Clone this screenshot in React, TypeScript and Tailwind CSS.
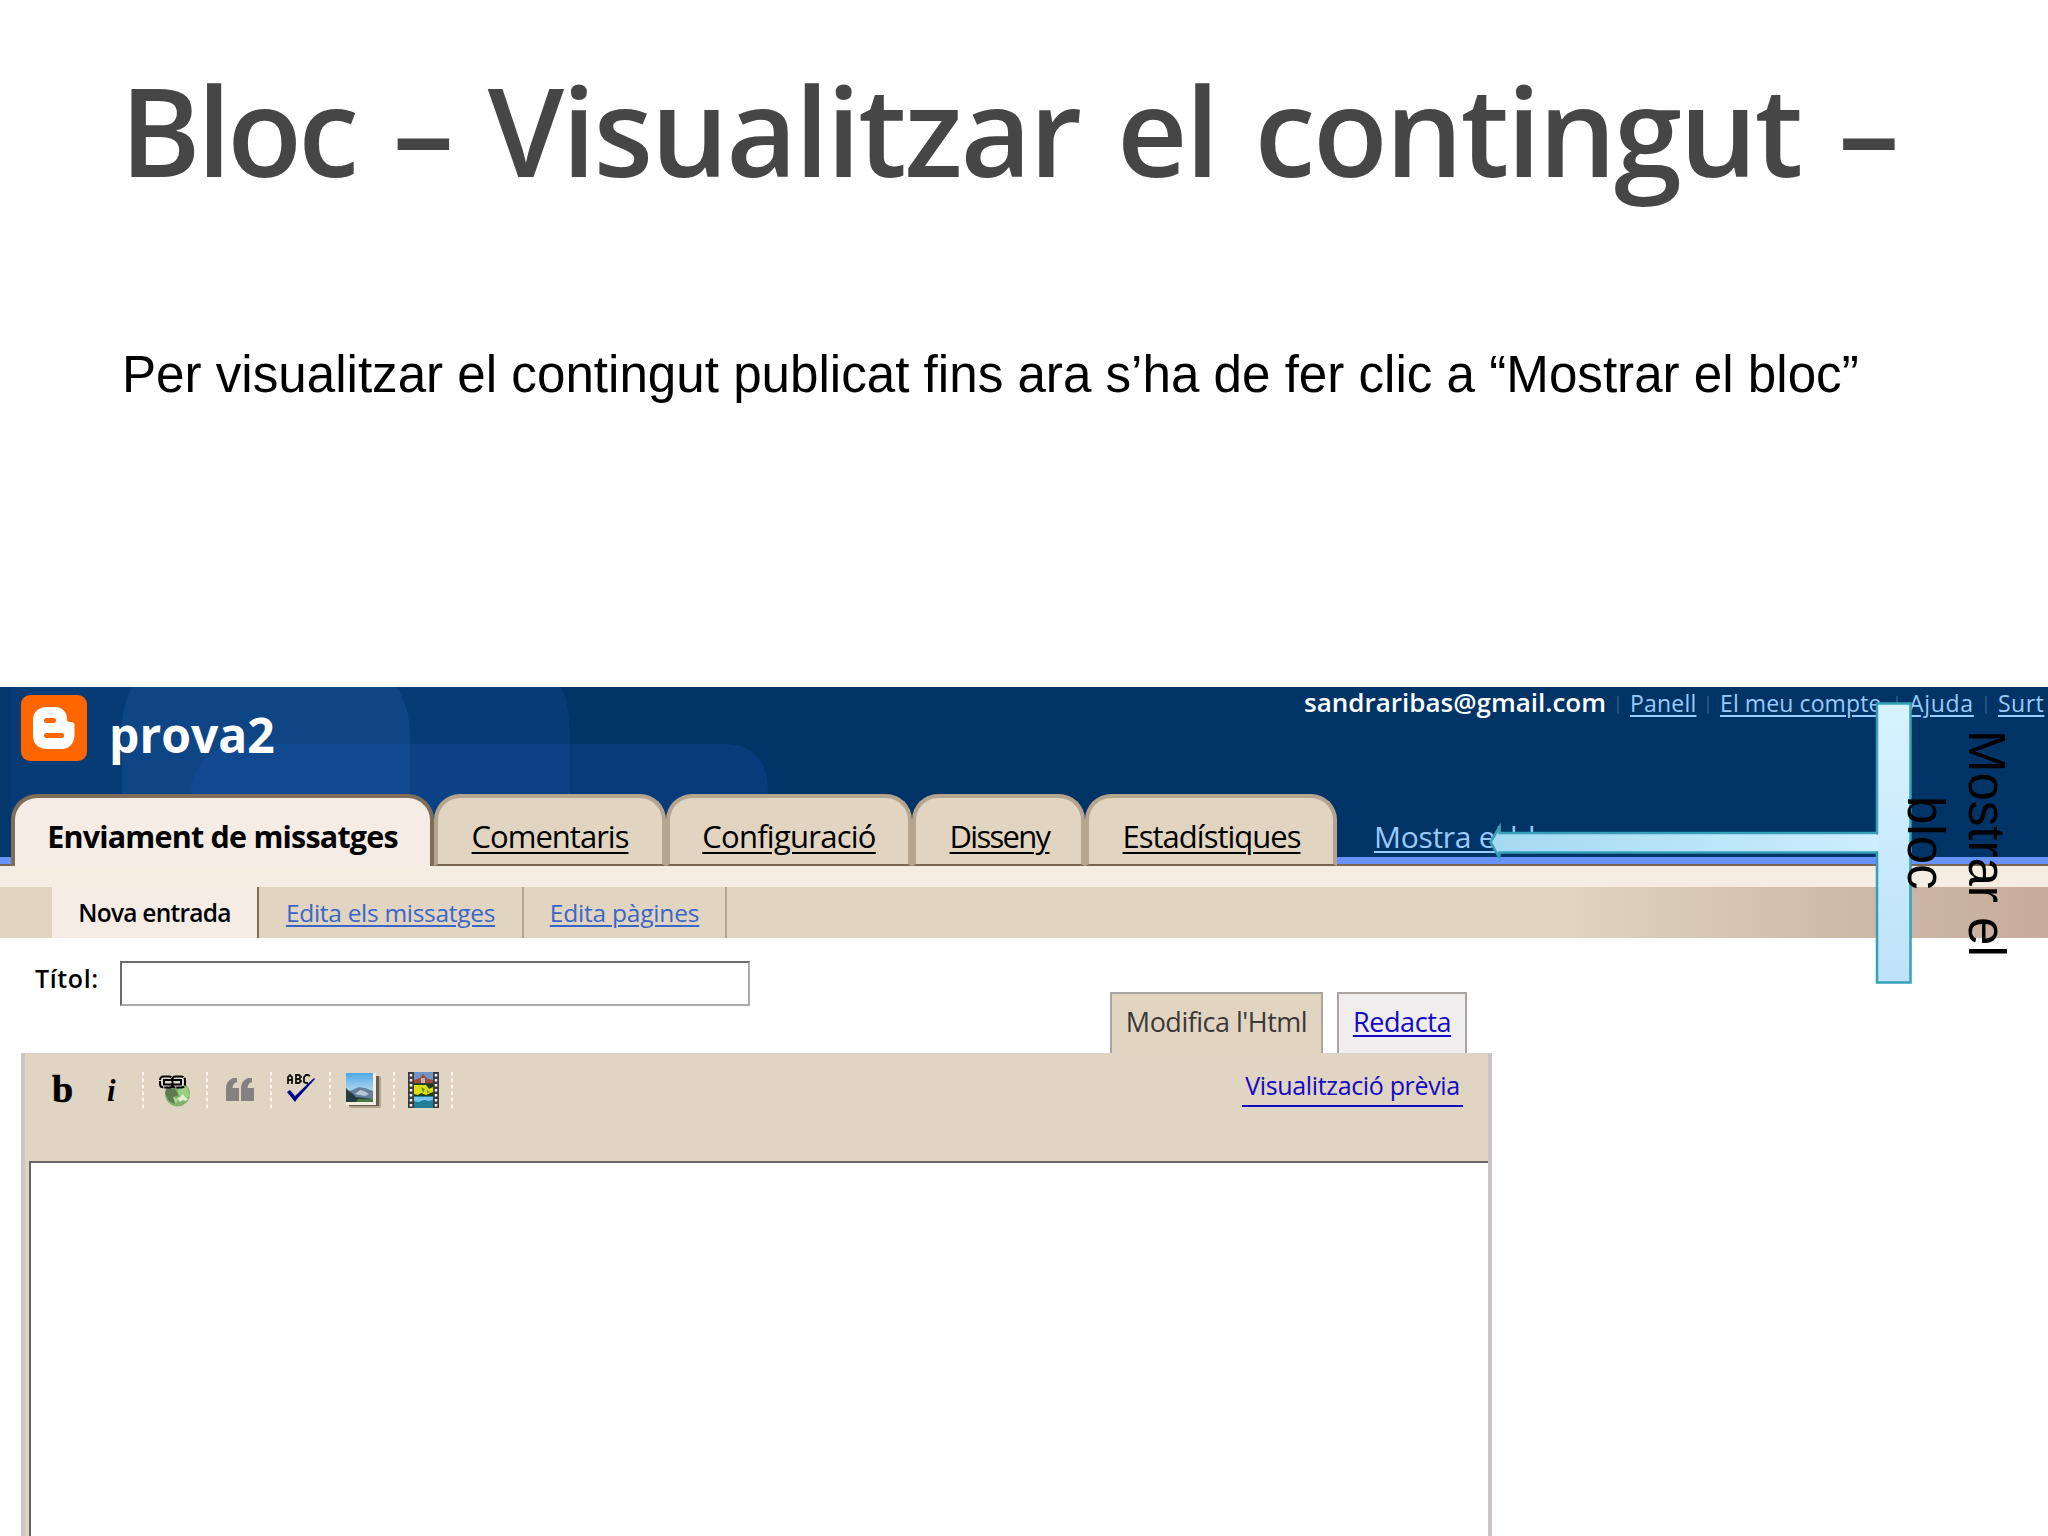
import type { ReactNode } from 'react';

const tabs = [
  { label: 'Enviament de missatges', className: 'w-[423px] border-x-[4px] border-[#7f6c59] bg-[#f5ede5] font-bold text-[30.5px] tracking-[-0.8px]' },
  { label: 'Comentaris', className: 'w-[232px] border-x-[4px] border-b-2 border-[#b5a48e] border-b-[#7a6652] bg-[#e1d5c1] underline tracking-[-1px]' },
  { label: 'Configuració', className: 'w-[246px] border-x-[4px] border-b-2 border-[#b5a48e] border-b-[#7a6652] bg-[#e1d5c1] underline tracking-[-0.75px]' },
  { label: 'Disseny', className: 'w-[173px] border-x-[4px] border-b-2 border-[#b5a48e] border-b-[#7a6652] bg-[#e1d5c1] pl-[2px] underline tracking-[-1.7px]' },
  { label: 'Estadístiques', className: 'w-[252px] border-x-[4px] border-b-2 border-[#b5a48e] border-b-[#7a6652] bg-[#e1d5c1] pl-[1px] underline tracking-[-1px]' },
];

const userLinks = [
  { label: 'Panell', className: 'w-[66px] mr-[11px] tracking-[0.2px]' },
  { label: 'El meu compte', className: 'w-[165px] mr-[11px] tracking-[0.1px]' },
  { label: 'Ajuda', className: 'w-[65px] mr-[11px] tracking-[0.7px]' },
  { label: 'Surt', className: 'w-[46px] tracking-[0.5px]' },
];

function BloggerLogo() {
  return (
    <svg className="mt-[8px] h-[66px] w-[66px] shrink-0" viewBox="0 0 66 66">
      <rect width="66" height="66" rx="9" fill="#ff6600" />
      <path
        d="M25 12h9c8 0 12 6 12 12 0 2 1 3 3 3h1c2 0 3.500 1 3.500 3V40c0 8-5 14-13 14H26c-8 0-14-5-14-13V25c0-8 6-13 13-13z"
        fill="#fff"
      />
      <rect x="23" y="23" width="12" height="5" rx="2.500" fill="#ff6600" />
      <rect x="23" y="38" width="20" height="5" rx="2.500" fill="#ff6600" />
    </svg>
  );
}

// Overlapping rounded shapes behind the blog name
function HeaderPattern() {
  return (
    <svg className="absolute inset-0 h-[179px] w-[800px]" viewBox="0 0 800 179">
      <path d="M0 0H560Q570 10 570 60V179H0z" fill="#1c56a8" opacity="0.24" />
      <path d="M122 179V36Q124 14 132 0H396Q410 18 410 50V179z" fill="#2a68c0" opacity="0.22" />
      <path d="M190 179V110Q194 57 245 57H725Q768 57 768 107V179z" fill="#1c56b8" opacity="0.24" />
      <rect width="11" height="179" fill="#003366" opacity="0.45" />
    </svg>
  );
}

function ToolSlot({ className, children }: { className: string; children: ReactNode }) {
  return <div className={`flex h-[36px] shrink-0 items-start ${className}`}>{children}</div>;
}

function Divider() {
  return (
    <svg className="h-[36px] w-[2px] shrink-0" viewBox="0 0 2 36">
      <path d="M1 0v36" stroke="#fbf8f1" strokeWidth="2" strokeDasharray="3.500 3" />
    </svg>
  );
}

function LinkIcon() {
  return (
    <svg className="mt-[3px] h-[32px] w-[32px]" viewBox="0 0 32 32">
      <circle cx="18.500" cy="19" r="12.500" fill="#82b070" />
      <path d="M8 12l8 2 4 6-6 2 2 7-6-3-4-8z" fill="#5d7a50" />
      <path d="M20 11l8 2 3 8-6 3-6-5z" fill="#9bd084" />
      <path d="M14 22l5 2-2 5z" fill="#a5d98e" />
      <path d="M18 23l3-1 3-3 2 3 3 2-2 2-3-1-3 2z" fill="#dcf0cb" />
      <g fill="#dcd8ca" stroke="#000" strokeWidth="2">
        <rect x="1" y="1.500" width="13" height="11" rx="3.500" strokeDasharray="8 1" />
        <rect x="13" y="1.500" width="13" height="11" rx="3.500" strokeDasharray="8 1" />
        <rect x="5" y="5" width="17" height="4.500" />
        <path d="M13.500 3v9" />
      </g>
    </svg>
  );
}

function QuoteIcon() {
  return (
    <svg className="mt-[6px] h-[23px] w-[28px]" viewBox="0 0 28 23" fill="#858181">
      <path d="M0 23V10Q0 3 7 0h4v4Q7 5 6.500 10H13v13z" />
      <path d="M15 23V10Q15 3 22 0h4v4Q22 5 21.500 10H28v13z" />
    </svg>
  );
}

function SpellIcon() {
  return (
    <svg className="h-[34px] w-[31px]" viewBox="0 0 31 34">
      <g fill="none" stroke="#111" strokeWidth="1.800">
        <path d="M2 12V5l2-2 2 2v7M2 8h4" />
        <path d="M10 3v8h3l2-2-2-2 2-2-2-2zM10 7h4" />
        <path d="M24 4l-2-1h-2l-2 2v5l2 1h2" />
      </g>
      <path d="M1 20l3-2 5 6L28 6l1 1L11 27l-2 3z" fill="#00008c" />
    </svg>
  );
}

function ImageIcon() {
  return (
    <svg className="h-[37px] w-[36px]" viewBox="0 0 36 37">
      <defs>
        <linearGradient id="sky" x1="0" y1="0" x2="0" y2="1">
          <stop offset="0" stopColor="#4fa6e8" />
          <stop offset="1" stopColor="#b4dcf0" />
        </linearGradient>
      </defs>
      <rect x="3" y="4" width="32" height="32" rx="2" fill="#b3a48e" />
      <rect x="3" y="4" width="30" height="30" fill="#6b5b50" />
      <rect x="0" y="1" width="30" height="32" fill="#f3efdf" />
      <rect x="0" y="1" width="27" height="19" fill="url(#sky)" />
      <path d="M0 20l6-2 7-3 6 1 8 3v8H0z" fill="#66809b" />
      <path d="M9 22l5-4 4 1 5 3-4 2z" fill="#b8c9d8" />
      <path d="M0 16l3 3 3 2 4 4 17 2v3H0z" fill="#243c40" />
      <path d="M12 27h15v3H10z" fill="#4d7446" />
    </svg>
  );
}

function VideoIcon() {
  return (
    <svg className="h-[36px] w-[31px]" viewBox="0 0 31 36">
      <rect width="31" height="36" fill="#3c3a3c" />
      <path d="M3 2v33M28 2v33" stroke="#f3f1e9" strokeWidth="2.500" strokeDasharray="2.500 2.500" />
      <rect x="6" width="19" height="11" fill="#7196c4" />
      <path d="M6 11V8l6-2 3-4 5 5 5 1v3z" fill="#9b4b40" />
      <path d="M13 6h4v5h-4z" fill="#c6b2a8" />
      <rect x="6" y="12" width="19" height="12" fill="#1f3e16" />
      <path d="M6 13h12l3 4 4-2v5l-7 3-5-2-3 2-4-1z" fill="#d8df12" />
      <path d="M13 15l4 2-2 4zM19 18l3 2-3 1z" fill="#70900c" />
      <rect x="6" y="24" width="19" height="12" fill="#1f7f96" />
      <path d="M6 25h19v3l-4 1-5-1-6 2-4-1z" fill="#78c4ef" />
    </svg>
  );
}

function Callout() {
  return (
    <div className="absolute left-[1487px] top-[700px] h-[286px] w-[540px]">
      <svg className="absolute inset-0" width="540" height="286" viewBox="0 0 540 286">
        <defs>
          <linearGradient id="arrow" x1="0" x2="1">
            <stop offset="0" stopColor="#a4daf1" />
            <stop offset="1" stopColor="#cdeefe" />
          </linearGradient>
          <linearGradient id="bar" x1="0" y1="0" x2="0" y2="1">
            <stop offset="0" stopColor="#d8f3ff" />
            <stop offset="1" stopColor="#bee2f9" />
          </linearGradient>
        </defs>
        <path d="M3.500 142L12.500 127V133H392V152.500H12.500V158z" fill="url(#arrow)" stroke="#36a0b8" strokeWidth="2.500" />
        <rect x="390" y="3.500" width="33.500" height="279" fill="url(#bar)" stroke="#36a0b8" strokeWidth="2.500" />
        <path d="M386 134.500h6v16.500h-6z" fill="#cdeefe" />
      </svg>
      <div className="absolute left-[408px] top-[20px] flex h-[246px] w-[122px] items-center justify-center text-center font-['Liberation_Sans',sans-serif] text-[51px] leading-[61px] text-black [writing-mode:vertical-rl]">
        <p>
          Mostrar el
          <br />
          bloc
        </p>
      </div>
    </div>
  );
}

export default function App() {
  return (
    <div className="relative flex h-[1536px] w-[2048px] flex-col overflow-hidden bg-white font-['Open_Sans',sans-serif] whitespace-nowrap text-black">
      {/* Slide title */}
      <h1 className="h-[258px] shrink-0 pl-[120px] text-[122.5px] leading-[259px] font-semibold tracking-[-2.4px] text-[#464646] [word-spacing:8px]">
        <span className="tracking-[-3.8px] [word-spacing:9.5px]">Bloc – </span>
        Visualitzar el contingut –
      </h1>
      <p className="h-[429px] shrink-0 pl-[122px] font-['Liberation_Sans',sans-serif] text-[51.15px] leading-[233px]">
        Per visualitzar el contingut publicat fins ara s’ha de fer clic a “Mostrar el bloc”
      </p>

      {/* Blogger header */}
      <header className="relative h-[179px] shrink-0 bg-[#003366]">
        <HeaderPattern />
        <div className="relative flex h-[107px] pl-[21px]">
          <BloggerLogo />
          <div className="ml-[22px] text-[48px] leading-[95px] font-bold text-white">prova2</div>
          <div className="ml-auto flex pr-[4px] text-[23px] leading-[33px] text-[#98cbfb]">
            <span className="mr-[12px] w-[301px] text-[26px] leading-[31px] font-semibold text-white">sandraribas@gmail.com</span>
            {userLinks.map((link) => (
              <div key={link.label} className="flex">
                <span className="mt-[9px] mr-[11px] h-[18px] w-[2px] bg-[#26517e]" />
                <a className={`underline decoration-2 underline-offset-[3px] ${link.className}`}>{link.label}</a>
              </div>
            ))}
          </div>
        </div>
        <nav className="relative flex h-[72px] bg-[linear-gradient(to_top,#7a6652_2px,#6893ff_2px,#6893ff_9px,transparent_9px)] pl-[11px] text-[31px] leading-[76px]">
          {tabs.map((tab) => (
            <a key={tab.label} className={`h-[72px] rounded-t-[26px] border-t-[4px] text-center decoration-2 underline-offset-[4px] ${tab.className}`}>
              {tab.label}
            </a>
          ))}
          <a className="ml-[37px] pt-[4px] text-[30px] leading-[77px] tracking-[-0.3px] text-[#98cbfb] underline decoration-2 underline-offset-[3px]">Mostra el bloc</a>
        </nav>
      </header>

      <div className="h-[21px] shrink-0 bg-[#f5ede1]" />
      <nav className="flex h-[51px] shrink-0 bg-[linear-gradient(to_right,#e1d4c1_76%,#cbb8a5_92%,#c8ab9c)] pl-[52px] text-[24.5px] leading-[52px] text-[#3a66c8]">
        <span className="w-[207px] border-r-2 border-[#7f6c59] bg-[#f5ede5] text-center font-semibold tracking-[-0.75px] text-black">Nova entrada</span>
        <a className="w-[265px] border-r-2 border-[#b5a48e] text-center tracking-[-0.3px] underline decoration-2 underline-offset-[3px]">Edita els missatges</a>
        <a className="w-[203px] border-r-2 border-[#b5a48e] text-center tracking-[-0.2px] underline decoration-2 underline-offset-[3px]">Edita pàgines</a>
      </nav>

      {/* Entry title and editor mode tabs */}
      <div className="flex h-[115px] shrink-0">
        <label className="w-[120px] pl-[35px] text-[25px] leading-[81px] font-semibold tracking-[0.6px]">Títol:</label>
        <input className="mt-[23px] h-[45px] w-[630px] border-2 border-[#6b6b6b] border-r-[#aaa] border-b-[#aaa] bg-white" />
        <div className="mt-[54px] ml-[360px] h-[61px] w-[213px] border-2 border-b-0 border-[#aaa5a3] bg-[#e1d5c1] text-center text-[27px] leading-[55px] tracking-[-0.5px] text-[#3c3838]">
          Modifica l'Html
        </div>
        <a className="mt-[54px] ml-[14px] h-[61px] w-[130px] border-2 border-b-0 border-[#aaa5a3] bg-[#efedee] text-center text-[27px] leading-[55px] tracking-[-0.4px] text-[#1408c4] underline decoration-2 underline-offset-[3px]">
          Redacta
        </a>
      </div>

      {/* Editor */}
      <section className="ml-[21px] flex w-[1471px] grow flex-col border-r-[4px] border-l-[4px] border-[#cac5c6] bg-[#e0d5c2]">
        <div className="flex h-[108px] shrink-0 pt-[19px] pl-[27px]">
          <ToolSlot className="w-[55px] font-['Liberation_Serif',serif] text-[38px] leading-[34px] font-bold [-webkit-text-stroke:0.6px_#000]">b</ToolSlot>
          <ToolSlot className="w-[35px] font-['Liberation_Serif',serif] text-[31px] leading-[37px] font-bold italic">i</ToolSlot>
          <Divider />
          <ToolSlot className="w-[62px] pl-[15px]"><LinkIcon /></ToolSlot>
          <Divider />
          <ToolSlot className="w-[62px] pl-[18px]"><QuoteIcon /></ToolSlot>
          <Divider />
          <ToolSlot className="w-[57px] pl-[14px]"><SpellIcon /></ToolSlot>
          <Divider />
          <ToolSlot className="w-[62px] pl-[15px]"><ImageIcon /></ToolSlot>
          <Divider />
          <ToolSlot className="w-[56px] pl-[13px]"><VideoIcon /></ToolSlot>
          <Divider />
          <a className="mr-[25px] ml-auto h-[35px] w-[221px] border-b-2 border-[#1408c4] text-center text-[25px] leading-[27px] tracking-[-0.35px] text-[#1408c4]">
            Visualització prèvia
          </a>
        </div>
        <div className="ml-[4px] grow border-t-2 border-l-2 border-[#666] bg-white" />
      </section>

      <Callout />
    </div>
  );
}
